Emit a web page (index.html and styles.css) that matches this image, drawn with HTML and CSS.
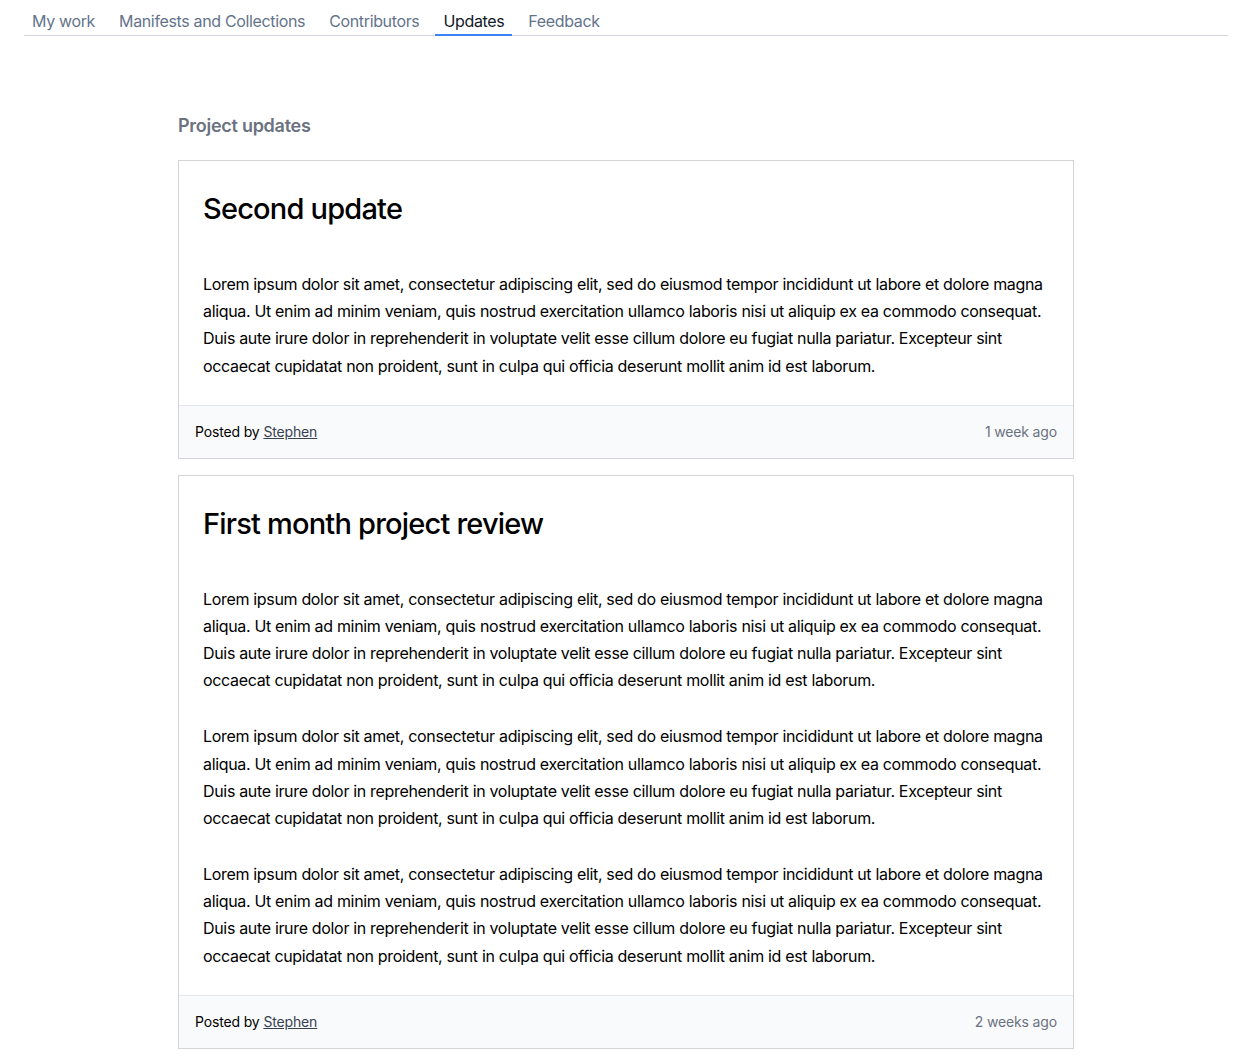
FILE: index.html
```html
<!DOCTYPE html>
<html lang="en">
<head>
<meta charset="utf-8">
<title>Project updates</title>
<link rel="stylesheet" href="styles.css">
</head>
<body>
<div class="page">
  <nav class="tabs">
    <a class="tab" href="#">My work</a>
    <a class="tab" href="#">Manifests and Collections</a>
    <a class="tab" href="#">Contributors</a>
    <a class="tab active" href="#">Updates</a>
    <a class="tab" href="#">Feedback</a>
  </nav>
  <main class="content">
    <h1 class="section-title">Project updates</h1>
    <article class="card">
      <div class="card-body">
        <h2 class="card-title">Second update</h2>
        <div class="prose">
          <p>Lorem ipsum dolor sit amet, consectetur adipiscing elit, sed do eiusmod tempor incididunt ut labore et dolore magna aliqua. Ut enim ad minim veniam, quis nostrud exercitation ullamco laboris nisi ut aliquip ex ea commodo consequat. Duis aute irure dolor in reprehenderit in voluptate velit esse cillum dolore eu fugiat nulla pariatur. Excepteur sint occaecat cupidatat non proident, sunt in culpa qui officia deserunt mollit anim id est laborum.</p>
        </div>
      </div>
      <footer class="card-footer">
        <span>Posted by <a class="author" href="#">Stephen</a></span>
        <span class="time">1 week ago</span>
      </footer>
    </article>
    <article class="card">
      <div class="card-body">
        <h2 class="card-title">First month project review</h2>
        <div class="prose">
          <p>Lorem ipsum dolor sit amet, consectetur adipiscing elit, sed do eiusmod tempor incididunt ut labore et dolore magna aliqua. Ut enim ad minim veniam, quis nostrud exercitation ullamco laboris nisi ut aliquip ex ea commodo consequat. Duis aute irure dolor in reprehenderit in voluptate velit esse cillum dolore eu fugiat nulla pariatur. Excepteur sint occaecat cupidatat non proident, sunt in culpa qui officia deserunt mollit anim id est laborum.</p>
          <p>Lorem ipsum dolor sit amet, consectetur adipiscing elit, sed do eiusmod tempor incididunt ut labore et dolore magna aliqua. Ut enim ad minim veniam, quis nostrud exercitation ullamco laboris nisi ut aliquip ex ea commodo consequat. Duis aute irure dolor in reprehenderit in voluptate velit esse cillum dolore eu fugiat nulla pariatur. Excepteur sint occaecat cupidatat non proident, sunt in culpa qui officia deserunt mollit anim id est laborum.</p>
          <p>Lorem ipsum dolor sit amet, consectetur adipiscing elit, sed do eiusmod tempor incididunt ut labore et dolore magna aliqua. Ut enim ad minim veniam, quis nostrud exercitation ullamco laboris nisi ut aliquip ex ea commodo consequat. Duis aute irure dolor in reprehenderit in voluptate velit esse cillum dolore eu fugiat nulla pariatur. Excepteur sint occaecat cupidatat non proident, sunt in culpa qui officia deserunt mollit anim id est laborum.</p>
        </div>
      </div>
      <footer class="card-footer">
        <span>Posted by <a class="author" href="#">Stephen</a></span>
        <span class="time">2 weeks ago</span>
      </footer>
    </article>
  </main>
</div>
</body>
</html>
```
FILE: styles.css
```css
* { box-sizing: border-box; }
html, body { margin: 0; padding: 0; background: #fff; }
body {
  font-family: Inter, "Noto Sans", "Liberation Sans", sans-serif;
  color: #000;
}
.page { padding: 0 24px 8px; }
.tabs {
  display: flex;
  gap: 8px;
  border-bottom: 1px solid #d1d5db;
}
.tab {
  display: block;
  padding: 9px 8px 1px;
  font-size: 16px;
  line-height: 24px;
  letter-spacing: -0.35px;
  color: #64748b;
  text-decoration: none;
  border-bottom: 2px solid transparent;
  margin-bottom: -1px;
}
.tab.active {
  color: #111827;
  border-bottom-color: #3b82f6;
}
.content {
  width: 896px;
  margin: 0 auto;
  padding-top: 76px;
  display: flex;
  flex-direction: column;
  gap: 16px;
}
.section-title {
  margin: 0 0 4px;
  font-size: 18px;
  line-height: 28px;
  font-weight: 600;
  letter-spacing: -0.27px;
  color: #6b7280;
}
.card {
  border: 1px solid #d4d4d8;
  background: #fff;
}
.card-body { padding: 24px 24px 25px; }
.card-title {
  margin: 6px 0 44px;
  font-size: 29px;
  line-height: 36px;
  font-weight: 500;
  letter-spacing: -0.8px;
  color: #000;
}
.prose p {
  margin: 0;
  font-size: 16px;
  line-height: 27.2px;
  letter-spacing: -0.33px;
}
.prose p + p { margin-top: 28.8px; }
.card-footer {
  display: flex;
  justify-content: space-between;
  align-items: center;
  padding: 16px;
  background: #f9fafb;
  border-top: 1px solid #e5e7eb;
  font-size: 14px;
  line-height: 20px;
  letter-spacing: -0.15px;
}
.author { color: #374151; text-decoration: underline; }
.time { color: #6b7280; }
```
